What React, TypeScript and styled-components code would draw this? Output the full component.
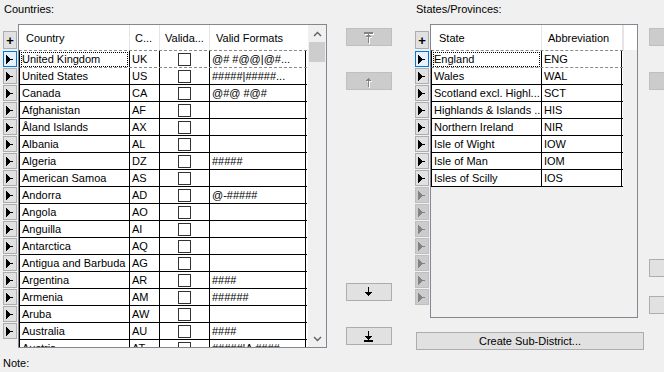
import React from 'react'
import styled, { createGlobalStyle } from 'styled-components'

const GlobalStyle = createGlobalStyle`
  html, body {
    margin: 0;
    padding: 0;
    background: #f0f0f0;
    font-family: "Liberation Sans", Arial, sans-serif;
    font-size: 11px;
    color: #000;
  }
`

const Countries = [
  ['United Kingdom', 'UK', '@# #@@|@#...'],
  ['United States', 'US', '#####|#####...'],
  ['Canada', 'CA', '@#@ #@#'],
  ['Afghanistan', 'AF', ''],
  ['Åland Islands', 'AX', ''],
  ['Albania', 'AL', ''],
  ['Algeria', 'DZ', '#####'],
  ['American Samoa', 'AS', ''],
  ['Andorra', 'AD', '@-#####'],
  ['Angola', 'AO', ''],
  ['Anguilla', 'AI', ''],
  ['Antarctica', 'AQ', ''],
  ['Antigua and Barbuda', 'AG', ''],
  ['Argentina', 'AR', '####'],
  ['Armenia', 'AM', '######'],
  ['Aruba', 'AW', ''],
  ['Australia', 'AU', '####'],
  ['Austria', 'AT', '#####|A ####'],
]

const States = [
  ['England', 'ENG'],
  ['Wales', 'WAL'],
  ['Scotland excl. Highl...', 'SCT'],
  ['Highlands & Islands ...', 'HIS'],
  ['Northern Ireland', 'NIR'],
  ['Isle of Wight', 'IOW'],
  ['Isle of Man', 'IOM'],
  ['Isles of Scilly', 'IOS'],
]

const Arrow = ({ off }: { off?: boolean }) => (
  <svg width="9" height="9" viewBox="0 0 9 9" shapeRendering="crispEdges">
    <g fill={off ? '#838383' : '#000'}>
      <rect x="1" y="0" width="1" height="9" />
      <rect x="2" y="1" width="1" height="7" />
      <rect x="3" y="2" width="1" height="5" />
      <rect x="4" y="3" width="1" height="3" />
      <rect x="5" y="4" width="3" height="1" />
    </g>
  </svg>
)

const MoveIcon = ({ kind, off }: { kind: 'top' | 'up' | 'down' | 'bottom'; off?: boolean }) => {
  const up = kind === 'top' || kind === 'up'
  const bar = kind === 'top' || kind === 'bottom'
  const shapes = (
    <>
      {bar && <rect x="0" y={up ? 0 : 9} width="9" height="2" />}
      {up ? (
        <>
          <rect x="4" y="2" width="1" height="1" />
          <rect x="3" y="3" width="3" height="1" />
          <rect x="2" y="4" width="5" height="1" />
          <rect x="4" y="4" width="1" height="7" />
        </>
      ) : (
        <>
          <rect x="4" y="0" width="1" height="6" />
          <rect x="1" y="5" width="7" height="1" />
          <rect x="2" y="6" width="5" height="1" />
          <rect x="3" y="7" width="3" height="1" />
          <rect x="4" y="8" width="1" height="1" />
        </>
      )}
    </>
  )
  return (
    <svg width="10" height="12" viewBox="0 0 10 12" shapeRendering="crispEdges">
      {off && <g fill="#fff" transform="translate(1 1)">{shapes}</g>}
      <g fill={off ? '#838383' : '#000'}>{shapes}</g>
    </svg>
  )
}

const Chevron = ({ down }: { down?: boolean }) => (
  <svg width="9" height="6" viewBox="0 0 9 6">
    <polyline
      points={down ? '1,1 4.5,4.5 8,1' : '1,5 4.5,1.5 8,5'}
      fill="none"
      stroke="#606060"
      strokeWidth="1.4"
    />
  </svg>
)

const App = () => {
  return (
    <Page>
      <GlobalStyle />
      <LeftPanel>
        <Label>Countries:</Label>
        <GridRow>
          <Selectors height={324}>
            <PlusButton>+</PlusButton>
            {Countries.slice(0, 17).map((c, i) => (
              <RowButton key={c[1]} selected={i === 0}>
                <Arrow />
              </RowButton>
            ))}
          </Selectors>
          <Frame width={309} height={324}>
            <TableArea>
              <Header>
                <HeadCell w={111} pad={7}>Country</HeadCell>
                <HeadCell w={30} pad={5}>C...</HeadCell>
                <HeadCell w={50} pad={5}>Valida...</HeadCell>
                <HeadCell w={97} pad={6} last>Valid Formats</HeadCell>
              </Header>
              {Countries.map((c, i) => (
                <Row key={c[1]} selected={i === 0} next={i === 1}>
                  <Cell w={110}>
                    {i === 0 ? <Focus>{c[0]}</Focus> : c[0]}
                  </Cell>
                  <Cell w={30}>{c[1]}</Cell>
                  <Cell w={50} center>
                    <Check />
                  </Cell>
                  <Cell w={96}>{c[2]}</Cell>
                </Row>
              ))}
            </TableArea>
            <ScrollBar>
              <ScrollArrow>
                <Chevron />
              </ScrollArrow>
              <Thumb />
              <ScrollTrack />
              <ScrollArrow>
                <Chevron down />
              </ScrollArrow>
            </ScrollBar>
          </Frame>
        </GridRow>
        <Note>Note:</Note>
      </LeftPanel>

      <MiddleColumn>
        <MoveButton off>
          <MoveIcon kind="top" off />
        </MoveButton>
        <MoveButton off gap={26}>
          <MoveIcon kind="up" off />
        </MoveButton>
        <MoveButton gap={193}>
          <MoveIcon kind="down" />
        </MoveButton>
        <MoveButton gap={26}>
          <MoveIcon kind="bottom" />
        </MoveButton>
      </MiddleColumn>

      <RightPanel>
        <Label>States/Provinces:</Label>
        <GridRow>
          <Selectors height={294}>
            <PlusButton>+</PlusButton>
            {Array.from({ length: 15 }).map((_, i) => (
              <RowButton key={i} selected={i === 0} off={i >= States.length}>
                <Arrow off={i >= States.length} />
              </RowButton>
            ))}
          </Selectors>
          <Frame width={208} height={294} plain>
            <Header>
              <HeadCell w={111} pad={8}>State</HeadCell>
              <HeadCell w={81} pad={6}>Abbreviation</HeadCell>
              <HeadFill />
            </Header>
            <Body>
              {States.map((s, i) => (
                <Row key={s[1]} selected={i === 0} next={i === 1}>
                  <Cell w={110}>
                    {i === 0 ? <Focus>{s[0]}</Focus> : s[0]}
                  </Cell>
                  <Cell w={80}>{s[1]}</Cell>
                </Row>
              ))}
            </Body>
          </Frame>
          <SideButtons>
            <SideButton off />
            <SideButton off gap={26} />
            <SideButton gap={169} />
            <SideButton gap={19} />
          </SideButtons>
        </GridRow>
        <WideButton>Create Sub-District...</WideButton>
      </RightPanel>
    </Page>
  )
}

export default App

const Page = styled.div`
  width: 664px;
  height: 372px;
  display: flex;
  overflow: hidden;
`
const LeftPanel = styled.div`
  width: 324px;
  flex-shrink: 0;
  padding-left: 3px;
  display: flex;
  flex-direction: column;
`
const Label = styled.div`
  height: 24px;
  line-height: 13px;
  padding-top: 3px;
  box-sizing: border-box;
  padding-left: 1px;
`
const Note = styled.div`
  margin-top: 9px;
  line-height: 13px;
`
const GridRow = styled.div`
  display: flex;
  align-items: flex-start;
`
const Selectors = styled.div<{ height: number }>`
  width: 14px;
  flex-shrink: 0;
  height: ${p => p.height}px;
  margin-right: 1px;
  padding-top: 7px;
  box-sizing: border-box;
  display: flex;
  flex-direction: column;
  gap: 1px;
  overflow: hidden;
`
const PlusButton = styled.div`
  height: 18px;
  margin-bottom: 1px;
  box-sizing: border-box;
  border: 1px solid #adadad;
  background: #e1e1e1;
  display: flex;
  align-items: center;
  justify-content: center;
  font-weight: bold;
  font-size: 13px;
  flex-shrink: 0;
`
const RowButton = styled.div<{ selected?: boolean; off?: boolean }>`
  height: 16px;
  flex-shrink: 0;
  box-sizing: border-box;
  border: 1px solid ${p => (p.selected ? '#0078d7' : p.off ? '#bfbfbf' : '#adadad')};
  background: ${p => (p.selected ? '#e5f1fb' : p.off ? '#cccccc' : '#e1e1e1')};
  display: flex;
  align-items: center;
  padding-left: 1px;
`
const Frame = styled.div<{ width: number; height: number; plain?: boolean }>`
  width: ${p => p.width}px;
  height: ${p => p.height}px;
  box-sizing: border-box;
  border: 1px solid #828790;
  background: ${p => (p.plain ? '#f0f0f0' : '#fff')};
  display: flex;
  flex-direction: ${p => (p.plain ? 'column' : 'row')};
  overflow: hidden;
  flex-shrink: 0;
`
const TableArea = styled.div`
  width: 288px;
  display: flex;
  flex-direction: column;
`
const Header = styled.div`
  height: 25px;
  flex-shrink: 0;
  display: flex;
  background: #fff;
`
const HeadCell = styled.div<{ w: number; pad: number; last?: boolean }>`
  width: ${p => p.w}px;
  flex-shrink: 0;
  box-sizing: border-box;
  padding-left: ${p => p.pad}px;
  border-right: 1px solid ${p => (p.last ? '#fff' : '#e5e5e5')};
  display: flex;
  align-items: center;
  white-space: nowrap;
  overflow: hidden;
`
const HeadFill = styled.div`
  flex: 1;
  border-left: 1px solid #e5e5e5;
`
const Body = styled.div`
  width: 192px;
  border-bottom: 1px solid #000;
`
const Row = styled.div<{ selected?: boolean; next?: boolean }>`
  height: 17px;
  flex-shrink: 0;
  box-sizing: border-box;
  display: flex;
  border-left: 1px solid #000;
  border-top: 1px ${p => (p.selected || p.next ? 'dashed #8a8a8a' : 'solid #000')};
  background: #fff;
`
const Cell = styled.div<{ w: number; center?: boolean }>`
  width: ${p => p.w}px;
  flex-shrink: 0;
  box-sizing: border-box;
  border-right: 1px solid #000;
  padding-left: ${p => (p.center ? 0 : 2)}px;
  display: flex;
  align-items: center;
  justify-content: ${p => (p.center ? 'center' : 'flex-start')};
  white-space: nowrap;
  overflow: hidden;
  line-height: 16px;
`
const Focus = styled.span`
  flex: 1;
  margin-left: -1px;
  margin-right: 1px;
  height: 15px;
  line-height: 14px;
  padding-left: 1px;
  outline: 1px dotted #000;
  outline-offset: -1px;
`
const Check = styled.div`
  width: 13px;
  height: 13px;
  box-sizing: border-box;
  border: 1px solid #333;
  background: #fff;
`
const ScrollBar = styled.div`
  flex: 1;
  margin-left: 1px;
  background: #f0f0f0;
  display: flex;
  flex-direction: column;
`
const ScrollArrow = styled.div`
  height: 17px;
  display: flex;
  align-items: center;
  justify-content: center;
`
const Thumb = styled.div`
  height: 20px;
  margin: 0 1px;
  background: #cdcdcd;
`
const ScrollTrack = styled.div`
  flex: 1;
`
const MiddleColumn = styled.div`
  width: 88px;
  flex-shrink: 0;
  padding-top: 28px;
  padding-left: 19px;
  box-sizing: border-box;
  display: flex;
  flex-direction: column;
`
const MoveButton = styled.div<{ off?: boolean; gap?: number }>`
  width: 46px;
  height: 18px;
  margin-top: ${p => p.gap || 0}px;
  box-sizing: border-box;
  border: 1px solid ${p => (p.off ? '#bfbfbf' : '#adadad')};
  background: ${p => (p.off ? '#cccccc' : '#e1e1e1')};
  display: flex;
  align-items: center;
  justify-content: center;
  padding-top: 1px;
`
const RightPanel = styled.div`
  flex: 1;
  min-width: 0;
  display: flex;
  flex-direction: column;
`
const SideButtons = styled.div`
  margin-left: 11px;
  padding-top: 4px;
  flex-shrink: 0;
  display: flex;
  flex-direction: column;
`
const SideButton = styled.div<{ off?: boolean; gap?: number }>`
  width: 30px;
  height: 18px;
  margin-top: ${p => p.gap || 0}px;
  box-sizing: border-box;
  border: 1px solid ${p => (p.off ? '#bfbfbf' : '#adadad')};
  background: ${p => (p.off ? '#cccccc' : '#e1e1e1')};
`
const WideButton = styled.div`
  width: 228px;
  height: 18px;
  margin-top: 14px;
  margin-left: 1px;
  box-sizing: border-box;
  border: 1px solid #adadad;
  background: #e1e1e1;
  display: flex;
  align-items: center;
  justify-content: center;
`
